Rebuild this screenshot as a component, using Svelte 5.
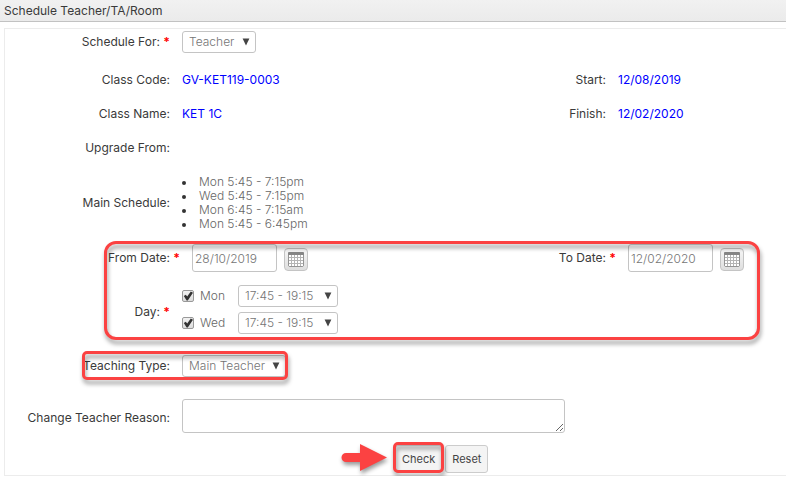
<script>
  let target = $state('Teacher');
  let fromDate = $state('28/10/2019');
  let toDate = $state('12/02/2020');
  let teachingType = $state('Main Teacher');
  let reason = $state('');
  let days = $state([
    { name: 'Mon', checked: true, time: '17:45 - 19:15' },
    { name: 'Wed', checked: true, time: '17:45 - 19:15' }
  ]);
  const sessions = [
    'Mon 5:45 - 7:15pm',
    'Wed 5:45 - 7:15pm',
    'Mon 6:45 - 7:15am',
    'Mon 5:45 - 6:45pm'
  ];
  const gridX = [0, 3, 6, 9, 12];
  const gridY = [0, 3, 6, 9];
</script>

{#snippet arrow()}
  <svg class="arrow" viewBox="0 0 8 8" aria-hidden="true"><path d="M0.6 0.6H7.4L4 7.6Z" /></svg>
{/snippet}

{#snippet calendar(label)}
  <button type="button" class="calendar" aria-label={label}>
    <svg viewBox="0 0 16 15" width="16" height="15" aria-hidden="true">
      <rect x="0.5" y="0.5" width="15" height="14" rx="1.5" fill="#b4b4b4" stroke="#949494" />
      <rect x="0" y="0" width="16" height="3" rx="1" fill="#858585" />
      {#each gridY as y}
        {#each gridX as x}
          <rect x={x + 1} y={y + 3} width="2" height="2" fill="#fff" />
        {/each}
      {/each}
    </svg>
  </button>
{/snippet}

<header><h1>Schedule Teacher/TA/Room</h1></header>

<form class="panel" onsubmit={(e) => e.preventDefault()}>
  <div class="row first">
    <label class="name" for="target">Schedule For: <b>*</b></label>
    <span class="select">
      <select id="target" class="short" bind:value={target}>
        <option>Teacher</option><option>TA</option><option>Room</option>
      </select>
      {@render arrow()}
    </span>
  </div>

  <div class="row info">
    <span class="name">Class Code:</span><span class="fixed">GV-KET119-0003</span>
    <span class="name">Start:</span><span class="fixed">12/08/2019</span>
  </div>
  <div class="row info">
    <span class="name">Class Name:</span><span class="fixed">KET 1C</span>
    <span class="name">Finish:</span><span class="fixed">12/02/2020</span>
  </div>
  <div class="row info"><span class="name">Upgrade From:</span></div>

  <div class="row schedule">
    <span class="name">Main Schedule:</span>
    <ul>
      {#each sessions as session}<li><span>{session}</span></li>{/each}
    </ul>
  </div>

  <div class="period">
    <div class="row dates">
      <label class="name" for="from">From Date: <b>*</b></label>
      <span class="date"><input id="from" type="text" bind:value={fromDate} />{@render calendar('Pick from date')}</span>
      <label class="name" for="to">To Date: <b>*</b></label>
      <span class="date"><input id="to" type="text" bind:value={toDate} />{@render calendar('Pick to date')}</span>
    </div>
    <div class="row">
      <span class="name low">Day: <b>*</b></span>
      <div class="days">
        {#each days as day}
          <div class="day">
            <label><input type="checkbox" bind:checked={day.checked} />{day.name}</label>
            <span class="select">
              <select class="time" aria-label="{day.name} time" bind:value={day.time}>
                <option>17:45 - 19:15</option>
              </select>
              {@render arrow()}
            </span>
          </div>
        {/each}
      </div>
    </div>
    <span class="mark period-mark"></span>
  </div>

  <div class="row teaching">
    <label class="name" for="type">Teaching Type:</label>
    <span class="select">
      <select id="type" class="medium" bind:value={teachingType}>
        <option>Main Teacher</option>
      </select>
      {@render arrow()}
    </span>
    <span class="mark teaching-mark"></span>
  </div>

  <div class="row reason">
    <label class="name low" for="reason">Change Teacher Reason:</label>
    <textarea id="reason" bind:value={reason}></textarea>
  </div>

  <div class="actions">
    <span class="check">
      <button type="submit">Check</button>
      <span class="mark check-mark"></span>
      <svg class="pointer" viewBox="0 0 46 28" width="46" height="28" aria-hidden="true">
        <path d="M5 9H19V0L46 13.5L19 27V18H5A4.5 4.5 0 0 1 5 9Z" fill="#fb4242" />
      </svg>
    </span>
    <button type="reset">Reset</button>
  </div>
</form>

<style>
  :global(body) {
    background: #fff;
    color: #3a3a3a;
    font: 12px/14px Inter, "Liberation Sans", sans-serif;
  }
  :global(*) { box-sizing: border-box; }

  header {
    height: 22px;
    padding: 0 4px;
    background: linear-gradient(#f1f1f1, #ebebeb);
    border-bottom: 1px solid #c2c2c2;
  }
  h1 { margin: 0; font-size: 12px; line-height: 22px; font-weight: 400; }

  .panel {
    margin: 6px 0 0 4px;
    padding: 2px 0;
    border: 1px solid #ececec;
    border-right: 0;
  }
  .row {
    display: grid;
    grid-template-columns: 165px minmax(0, 1fr) 76px 168px;
    column-gap: 12px;
    align-items: center;
  }
  .name { text-align: right; white-space: nowrap; }
  .low { padding-top: 4px; }
  b { color: #f00; }
  .first { margin-bottom: 10px; }
  .info { height: 34px; }
  .fixed { color: #00f; }
  .schedule { margin-top: 10px; }
  ul { margin: 0; padding-left: 17px; list-style: none; }
  li { position: relative; font-weight: 300; color: #666; }
  li::before {
    content: "";
    position: absolute;
    left: -17px;
    top: 6px;
    width: 4px;
    height: 4px;
    border-radius: 50%;
    background: #333;
  }

  .period { position: relative; margin-top: 13px; }
  .dates { padding-left: 10px; grid-template-columns: 165px minmax(0, 1fr) 76px 158px; margin-bottom: 13px; }
  .date { display: flex; align-items: center; gap: 7px; }

  input, select, textarea, button { font: inherit; margin: 0; }
  input[type="text"], select, textarea {
    appearance: none;
    background: #fff;
    border: 1px solid #c4c4c4;
    border-radius: 3px;
    color: #757575;
    font-weight: 300;
    outline: 0;
  }
  input[type="text"] { width: 85px; height: 28px; padding: 0 2px; }
  select { display: block; height: 22px; padding: 0 6px; }
  .short { width: 74px; }
  .medium { width: 104px; }
  .time { width: 100px; }
  .select { position: relative; justify-self: start; }
  .arrow {
    position: absolute;
    right: 6px;
    top: 7px;
    width: 8px;
    height: 8px;
    fill: #444;
    pointer-events: none;
  }

  .calendar {
    display: flex;
    align-items: center;
    justify-content: center;
    width: 24px;
    height: 23px;
    margin-top: 2px;
    padding: 0;
    border: 1px solid #c4c4c4;
    border-radius: 4px;
    background: linear-gradient(#f6f6f6, #dedede);
  }

  .days { display: grid; row-gap: 5px; }
  .day { display: flex; align-items: center; }
  .day label {
    display: flex;
    align-items: center;
    gap: 6px;
    width: 56px;
    font-weight: 300;
    color: #666;
  }
  input[type="checkbox"] {
    appearance: none;
    position: relative;
    width: 12px;
    height: 12px;
    border: 1px solid #999;
    border-radius: 2px;
    background: linear-gradient(#f2f2f2, #dcdcdc);
  }
  input[type="checkbox"]:checked::after {
    content: "";
    position: absolute;
    inset: 0;
    background: #333;
    clip-path: polygon(8% 50%, 28% 38%, 42% 56%, 78% 4%, 100% 18%, 48% 94%, 36% 94%);
  }

  .teaching { position: relative; margin-top: 21px; }
  .reason { margin-top: 22px; }
  .reason textarea {
    grid-column: 2 / 4;
    width: 100%;
    max-width: 383px;
    height: 34px;
    display: block;
  }

  .mark {
    position: absolute;
    border: 3px solid #fb4242;
    filter: drop-shadow(1px 4px 2px rgba(0, 0, 0, 0.4));
    pointer-events: none;
  }
  .period-mark { inset: -3px 26px -6px 99px; border-radius: 12px; }
  .teaching-mark { left: 77px; top: -4px; width: 206px; height: 29px; border-radius: 5px; }
  .check-mark { inset: -3px -2px 0; border-radius: 5px; }

  .actions { display: flex; gap: 3px; margin-top: 12px; padding-left: 390px; }
  .check { position: relative; }
  .actions button {
    display: block;
    height: 28px;
    padding: 0 6px;
    border: 1px solid #ccc;
    border-radius: 3px;
    background: #f4f4f4;
    color: #444;
    font-size: 11px;
  }
  .pointer {
    position: absolute;
    left: -54px;
    top: -1px;
    overflow: visible;
    filter: drop-shadow(1px 3px 2px rgba(0, 0, 0, 0.4));
  }
</style>
